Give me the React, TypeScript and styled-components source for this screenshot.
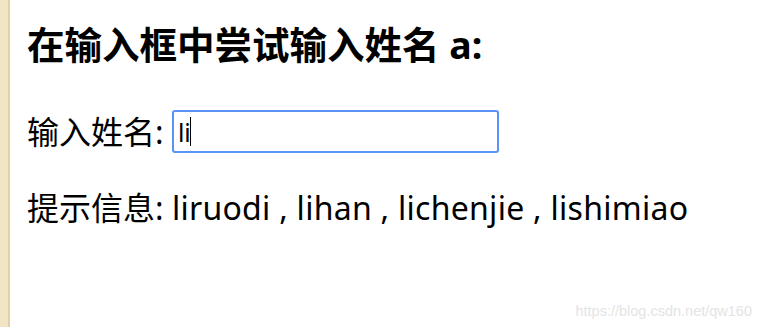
import React from "react";
import styled, { createGlobalStyle } from "styled-components";

const GlobalStyle = createGlobalStyle`
  html, body {
    margin: 0;
    padding: 0;
    background: #ffffff;
  }
  body {
    font-family: "Noto Sans", "Noto Sans CJK SC", sans-serif;
    color: #000;
  }
`;

const Page = styled.div`
  position: relative;
  display: flex;
  width: 761px;
  height: 327px;
  overflow: hidden;
  background: #ffffff;
`;

const Strip = styled.div`
  flex: 0 0 8px;
  background: #f1e5c5;
  border-right: 2px solid #e1d1a6;
`;

const Content = styled.div`
  display: flex;
  flex-direction: column;
  align-items: flex-start;
  padding-left: 17px;
`;

const Heading = styled.h3`
  margin: 25px 0 0 0;
  font-size: 37.5px;
  line-height: 40px;
  font-weight: 700;
  font-family: "Noto Sans", "Noto Sans CJK SC", sans-serif;
`;

const Row = styled.div`
  display: flex;
  align-items: center;
  margin-top: 45px;
  font-size: 32px;
  line-height: 43px;
`;

const Label = styled.span`
  white-space: pre;
`;

const Field = styled.div`
  position: relative;
  display: flex;
`;

const NameInput = styled.input`
  box-sizing: border-box;
  width: 327px;
  height: 43px;
  margin: 0;
  padding: 0 4px;
  border: 2px solid #5a93f5;
  border-radius: 3px;
  outline: none;
  font-family: "Noto Sans", "Noto Sans CJK SC", sans-serif;
  font-size: 25px;
  color: #000;
  background: #fff;
  caret-color: transparent;
`;

const Caret = styled.span`
  position: absolute;
  left: 18px;
  top: 7px;
  width: 1px;
  height: 29px;
  background: #000;
`;

const Hint = styled.div`
  margin-top: 35px;
  font-size: 32px;
  line-height: 40px;
  white-space: pre;
`;

const Names = styled.span`
  letter-spacing: 0.27px;
`;

const Watermark = styled.div`
  position: absolute;
  right: 9px;
  bottom: 8px;
  font-family: "Liberation Sans", Arial, sans-serif;
  font-size: 14.5px;
  color: #e4e4e4;
`;

export default function App() {
  return (
    <>
      <GlobalStyle />
      <Page>
        <Strip />
        <Content>
          <Heading>在输入框中尝试输入姓名 a:</Heading>
          <Row>
            <Label>输入姓名: </Label>
            <Field>
              <NameInput defaultValue="li" />
              <Caret />
            </Field>
          </Row>
          <Hint>
            提示信息: <Names>liruodi , lihan , lichenjie , lishimiao</Names>
          </Hint>
        </Content>
        <Watermark>https://blog.csdn.net/qw160</Watermark>
      </Page>
    </>
  );
}
